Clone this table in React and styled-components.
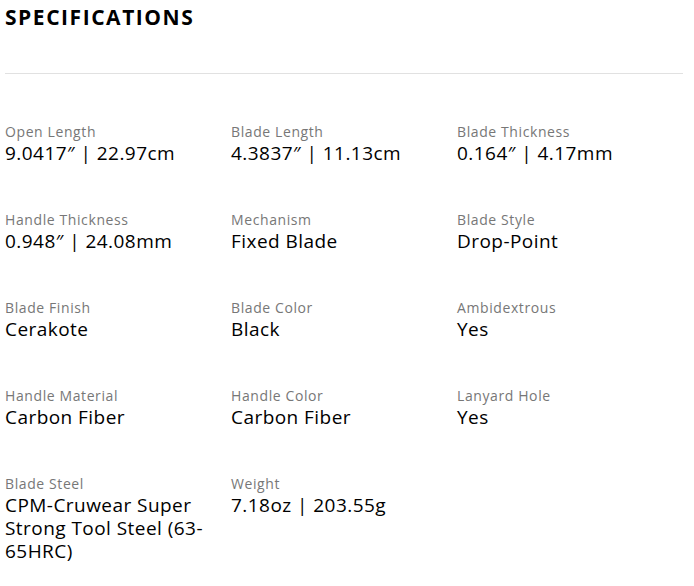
import React from 'react';
import styled, {createGlobalStyle} from 'styled-components';

const GlobalStyle = createGlobalStyle`
  body {
    margin: 0;
    background: #fff;
    font-family: "Open Sans", "Noto Sans", sans-serif;
  }
`;

const Section = styled.section`
  width: 678px;
  padding: 0 5px;
`;

const Title = styled.h2`
  margin: 0;
  padding-top: 4px;
  font-size: 21px;
  font-weight: 700;
  letter-spacing: 1.55px;
  color: #000;
  line-height: 26px;
`;

const Divider = styled.hr`
  margin: 43px 0 0;
  border: 0;
  border-top: 1px solid #e1e1e1;
`;

const Grid = styled.div`
  display: grid;
  grid-template-columns: repeat(3, 226px);
  row-gap: 45px;
  padding-top: 48px;
`;

const Spec = styled.div`
  padding-right: 14px;
`;

const Label = styled.div`
  font-size: 14px;
  font-weight: 500;
  letter-spacing: 0.6px;
  line-height: 20px;
  color: #777;
`;

const Value = styled.div`
  font-size: 19px;
  font-weight: 500;
  letter-spacing: 0.45px;
  line-height: 23px;
  color: #000;
`;

const specs = [
  ['Open Length', '9.0417″ | 22.97cm'],
  ['Blade Length', '4.3837″ | 11.13cm'],
  ['Blade Thickness', '0.164″ | 4.17mm'],
  ['Handle Thickness', '0.948″ | 24.08mm'],
  ['Mechanism', 'Fixed Blade'],
  ['Blade Style', 'Drop-Point'],
  ['Blade Finish', 'Cerakote'],
  ['Blade Color', 'Black'],
  ['Ambidextrous', 'Yes'],
  ['Handle Material', 'Carbon Fiber'],
  ['Handle Color', 'Carbon Fiber'],
  ['Lanyard Hole', 'Yes'],
  ['Blade Steel', 'CPM-Cruwear Super Strong Tool Steel (63-65HRC)'],
  ['Weight', '7.18oz | 203.55g'],
];

function App() {
  return (
    <Section>
      <GlobalStyle />
      <Title>SPECIFICATIONS</Title>
      <Divider />
      <Grid>
        {specs.map(([label, value], index) => (
          <Spec key={`spec-${index}`}>
            <Label>{label}</Label>
            <Value>{value}</Value>
          </Spec>
        ))}
      </Grid>
    </Section>
  );
}

export default App;
